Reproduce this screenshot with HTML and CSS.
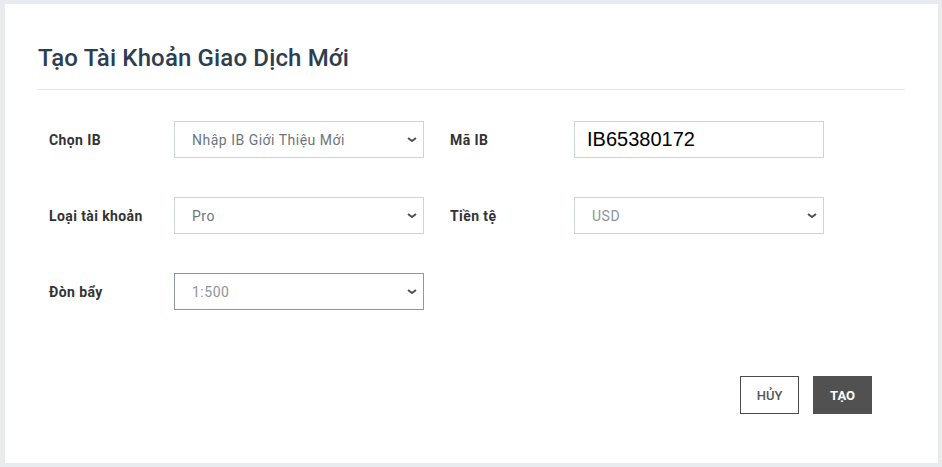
FILE: index.html
```html
<!DOCTYPE html>
<html lang="vi">
<head>
<meta charset="utf-8">
<title>Tạo Tài Khoản Giao Dịch Mới</title>
<link rel="stylesheet" href="styles.css">
</head>
<body>
<div class="card">
  <h1 class="title">Tạo Tài Khoản Giao Dịch Mới</h1>
  <div class="divider"></div>
  <form class="form">
    <label class="label">Chọn IB</label>
    <div class="cell"><select class="select"><option>Nhập IB Giới Thiệu Mới</option></select></div>
    <label class="label">Mã IB</label>
    <div class="cell"><input class="input" type="text" value="IB65380172"></div>

    <label class="label">Loại tài khoản</label>
    <div class="cell"><select class="select"><option>Pro</option></select></div>
    <label class="label">Tiền tệ</label>
    <div class="cell"><select class="select light"><option>USD</option></select></div>

    <label class="label">Đòn bẩy</label>
    <div class="cell"><select class="select light focus"><option>1:500</option></select></div>
  </form>
  <div class="actions">
    <button type="button" class="btn btn-outline">HỦY</button>
    <button type="button" class="btn btn-dark">TẠO</button>
  </div>
</div>
</body>
</html>
```
FILE: styles.css
```css
html, body {
  margin: 0;
  padding: 0;
}
body {
  background: #e9ecef;
  width: 942px;
  height: 467px;
  font-family: Roboto, "Noto Sans", sans-serif;
  overflow: hidden;
}
.card {
  box-sizing: border-box;
  margin: 4px 0 0 5px;
  width: 933px;
  height: 459px;
  background: #fff;
  padding: 0 33px;
  display: flex;
  flex-direction: column;
}
.title {
  margin: 36px 0 0 0;
  font-size: 24px;
  line-height: 36px;
  font-weight: 500;
  letter-spacing: 0.15px;
  color: #2c3e50;
}
.divider {
  margin-top: 13px;
  height: 1px;
  background: #e6e8eb;
}
.form {
  margin: 31px 0 0 11px;
  display: grid;
  grid-template-columns: 125px 276px 124px 250px;
  grid-auto-rows: 37px;
  row-gap: 39px;
  align-items: center;
}
.label {
  font-size: 14px;
  font-weight: 700;
  letter-spacing: 0.4px;
  color: #333;
}
.cell {
  height: 37px;
  display: flex;
}
.select, .input {
  box-sizing: border-box;
  width: 250px;
  height: 37px;
  border: 1px solid #ced4da;
  border-radius: 0;
  background-color: #fff;
  margin: 0;
  outline: none;
}
.select {
  -webkit-appearance: none;
  appearance: none;
  padding: 0 0 0 17px;
  font-family: Roboto, sans-serif;
  font-size: 14px;
  letter-spacing: 0.5px;
  color: #6c757d;
  background-image: url("data:image/svg+xml,%3Csvg xmlns='http://www.w3.org/2000/svg' width='10' height='5' viewBox='0 0 10 5'%3E%3Cpath d='M1 1 L5 4 L9 1' fill='none' stroke='%23505050' stroke-width='2'/%3E%3C/svg%3E");
  background-repeat: no-repeat;
  background-position: right 6px center;
  background-size: 10px 5px;
}
.select.light {
  color: #8e949b;
}
.select.focus {
  border-color: #8d96ab;
}
.input {
  padding: 0 12px;
  font-family: "Liberation Sans", Arial, sans-serif;
  font-size: 20px;
  color: #000;
}
.actions {
  margin-top: auto;
  margin-bottom: 49px;
  padding-right: 33px;
  display: flex;
  justify-content: flex-end;
  gap: 14px;
}
.btn {
  box-sizing: border-box;
  width: 59px;
  height: 38px;
  font-family: Roboto, sans-serif;
  font-size: 13px;
  font-weight: 500;
  border-radius: 0;
  cursor: pointer;
  padding: 0;
}
.btn-outline {
  background: #fff;
  border: 1.5px solid #4a4a4a;
  color: #555;
}
.btn-dark {
  background: #515151;
  border: none;
  color: #fff;
  font-weight: 700;
}
```
